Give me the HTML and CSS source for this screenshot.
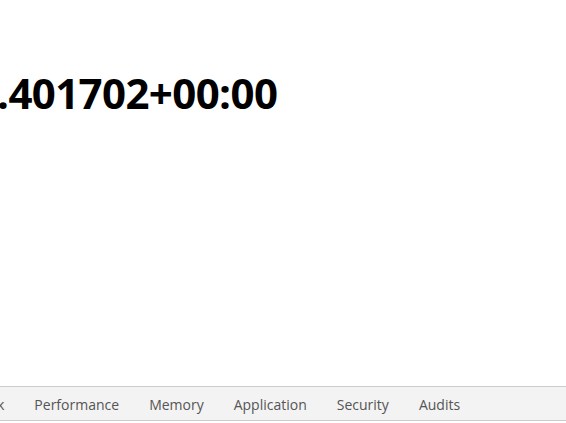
FILE: index.html
```html
<!DOCTYPE html>
<html>
<head>
<meta charset="utf-8">
<link rel="stylesheet" href="styles.css">
</head>
<body>
<div class="page">
  <main class="content">
    <h1 class="stamp">.401702+00:00</h1>
  </main>
  <nav class="tabs">
    <span class="tab tab-cut">k</span>
    <span class="tab">Performance</span>
    <span class="tab">Memory</span>
    <span class="tab">Application</span>
    <span class="tab">Security</span>
    <span class="tab">Audits</span>
  </nav>
</div>
</body>
</html>
```
FILE: styles.css
```css
html, body {
  margin: 0;
  padding: 0;
  background: #ffffff;
  overflow: hidden;
}
.page {
  width: 566px;
  height: 423px;
  display: flex;
  flex-direction: column;
}
.content {
  flex: 1;
  overflow: hidden;
}
.stamp {
  margin: 65px 0 0 -3px;
  font-family: "Open Sans", "Noto Sans", sans-serif;
  font-weight: 700;
  font-size: 42px;
  line-height: 56px;
  color: #000;
  letter-spacing: -0.6px;
  white-space: nowrap;
}
.tabs {
  height: 32px;
  margin-bottom: 2px;
  padding-top: 1px;
  border-top: 1px solid #cccccc;
  border-bottom: 1px solid #cccccc;
  background: #f3f3f3;
  display: flex;
  align-items: center;
  gap: 30px;
  overflow: hidden;
  font-family: "Open Sans", "Noto Sans", sans-serif;
  font-size: 14px;
  color: #555555;
  white-space: nowrap;
}
.tab-cut {
  margin-left: -3px;
}
```
